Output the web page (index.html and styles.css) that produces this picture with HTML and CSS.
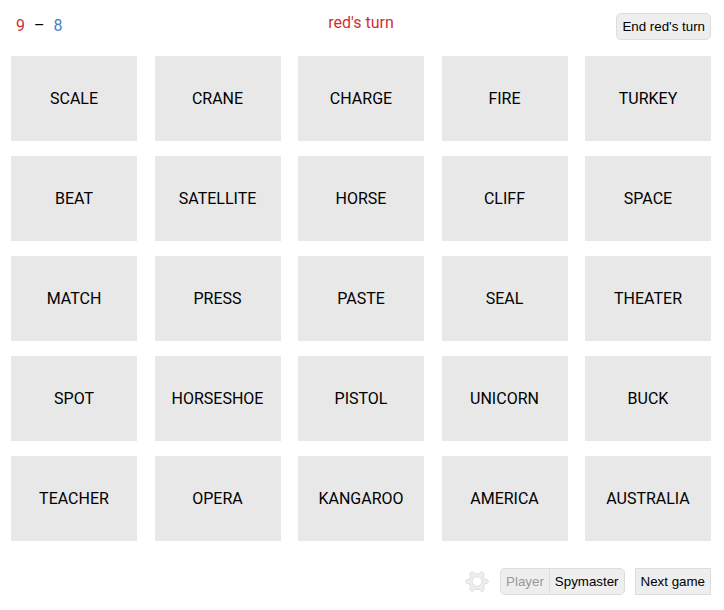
FILE: index.html
```html
<!DOCTYPE html>
<html lang="en">
<head>
<meta charset="utf-8">
<title>Word game</title>
<link rel="stylesheet" href="styles.css">
</head>
<body>
<main class="game">
  <header class="status">
    <div class="score"><span class="red">9</span><span>–</span><span class="blue">8</span></div>
    <div class="turn red">red's turn</div>
    <button class="button end-turn" type="button">End red's turn</button>
  </header>
  <section class="board">
    <button class="card" type="button">SCALE</button>
    <button class="card" type="button">CRANE</button>
    <button class="card" type="button">CHARGE</button>
    <button class="card" type="button">FIRE</button>
    <button class="card" type="button">TURKEY</button>
    <button class="card" type="button">BEAT</button>
    <button class="card" type="button">SATELLITE</button>
    <button class="card" type="button">HORSE</button>
    <button class="card" type="button">CLIFF</button>
    <button class="card" type="button">SPACE</button>
    <button class="card" type="button">MATCH</button>
    <button class="card" type="button">PRESS</button>
    <button class="card" type="button">PASTE</button>
    <button class="card" type="button">SEAL</button>
    <button class="card" type="button">THEATER</button>
    <button class="card" type="button">SPOT</button>
    <button class="card" type="button">HORSESHOE</button>
    <button class="card" type="button">PISTOL</button>
    <button class="card" type="button">UNICORN</button>
    <button class="card" type="button">BUCK</button>
    <button class="card" type="button">TEACHER</button>
    <button class="card" type="button">OPERA</button>
    <button class="card" type="button">KANGAROO</button>
    <button class="card" type="button">AMERICA</button>
    <button class="card" type="button">AUSTRALIA</button>
  </section>
  <footer class="controls">
    <button class="settings" type="button" aria-label="Settings">
      <svg class="gear" viewBox="0 0 24 24" width="24" height="24" aria-hidden="true">
        <path fill-rule="evenodd" d="M1 10.2 L4.3 9.2 Q4.8 7.8 5.6 6.7 L4.9 3.4 Q5.8 2 7.4 1.6 L10 3.9 Q12 3.4 14 3.9 L16.6 1.6 Q18.2 2 19.1 3.4 L18.4 6.7 Q19.2 7.8 19.7 9.2 L23 10.2 Q23.6 11.5 23 12.8 L19.7 13.8 Q19.2 15.2 18.4 16.3 L19.1 19.6 Q18.2 21 16.6 21.4 L14 19.1 Q12 19.6 10 19.1 L7.4 21.4 Q5.8 21 4.9 19.6 L5.6 16.3 Q4.8 15.2 4.3 13.8 L1 12.8 Q0.4 11.5 1 10.2 Z M12 6.6 A4.9 4.9 0 1 0 12 16.4 A4.9 4.9 0 1 0 12 6.6 Z"/>
      </svg>
    </button>
    <div class="toggle">
      <button class="button player" type="button" disabled>Player</button>
      <button class="button spymaster" type="button">Spymaster</button>
    </div>
    <button class="button next" type="button">Next game</button>
  </footer>
</main>
</body>
</html>
```
FILE: styles.css
```css
* {
  box-sizing: border-box;
}

body {
  margin: 0;
  background: #fff;
  color: #000;
  font: 16px/20px Roboto, sans-serif;
}

.game {
  padding: 13px 13px 0 11px;
}

.status {
  display: grid;
  grid-template-columns: 1fr auto 1fr;
  align-items: start;
  height: 43px;
}

.score {
  display: flex;
  gap: 9px;
  padding: 3px 5px;
}

.red {
  color: #d13030;
}

.blue {
  color: #4183cc;
}

.button {
  height: 27px;
  margin: 0;
  padding: 0 5px;
  border: 1px solid #ddd;
  background: #eee;
  color: #000;
  font: smaller "Liberation Sans", Arial, sans-serif;
  white-space: nowrap;
}

.end-turn {
  justify-self: end;
  border-radius: 5px;
}

.board {
  display: grid;
  grid-template-columns: repeat(5, 18%);
  justify-content: space-between;
  row-gap: 15px;
}

.card {
  height: 85px;
  padding: 0;
  border: 0;
  background: #e8e8e8;
  color: #000;
  font: 16px/20px Roboto, sans-serif;
}

.controls {
  display: flex;
  justify-content: flex-end;
  align-items: center;
  margin-top: 27px;
}

.settings {
  display: flex;
  margin-right: 11px;
  padding: 0;
  border: 0;
  background: none;
}

.gear {
  fill: #eee;
  stroke: #ddd;
  stroke-width: 1;
  stroke-linejoin: round;
}

.toggle {
  display: flex;
  margin-right: 10px;
}

.player {
  border-right: 0;
  border-radius: 5px 0 0 5px;
  color: #999;
}

.spymaster {
  border-radius: 0 5px 5px 0;
}
```
